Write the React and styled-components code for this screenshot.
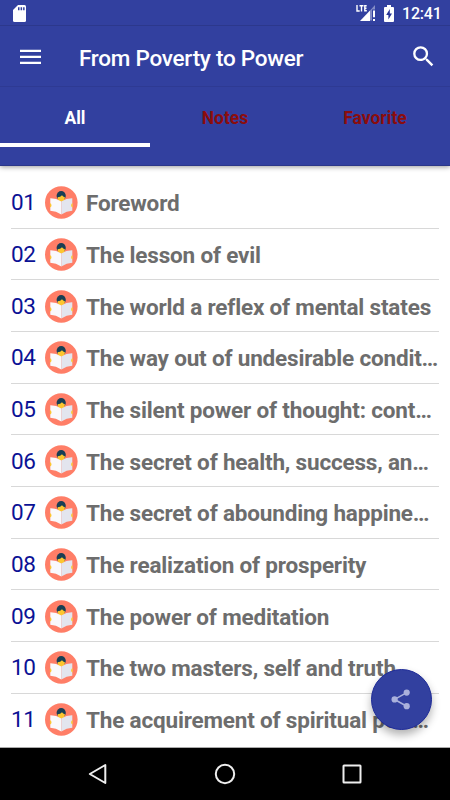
import React, { useState } from 'react';
import styled, { createGlobalStyle } from 'styled-components';

const GlobalStyle = createGlobalStyle`
  * {
    box-sizing: border-box;
  }

  body {
    margin: 0;
    background: #fff;
    font-family: Roboto, sans-serif;
  }
`;

const Screen = styled.div`
  position: relative;
  display: flex;
  flex-direction: column;
  width: 450px;
  height: 800px;
  overflow: hidden;
`;

const Header = styled.header`
  flex: none;
  height: 166px;
  background: #32409f;
  color: #fff;
  border-bottom: 1px solid #2b3789;
  box-shadow: 0 1px 5px rgba(0, 0, 0, 0.4);
`;

const StatusBar = styled.div`
  display: flex;
  align-items: center;
  height: 26px;
  padding: 1px 9px 0 13px;
  border-bottom: 1px solid #2c388c;
`;

const StatusIcons = styled.div`
  display: flex;
  align-items: center;
  gap: 8px;
  margin-left: auto;
`;

const Clock = styled.span`
  width: 39px;
  padding-top: 2px;
  font-size: 16px;
  font-weight: 500;
  line-height: 20px;
  letter-spacing: -0.2px;
  white-space: nowrap;
`;

const Toolbar = styled.div`
  display: flex;
  align-items: center;
  height: 61px;
  padding: 1px 15px 0 20px;
  border-bottom: 1px solid #2e3a93;
`;

const Title = styled.h1`
  flex: 1;
  margin: 2px 0 0 38px;
  font-size: 22.5px;
  font-weight: 500;
  line-height: 28px;
  letter-spacing: -0.25px;
  white-space: nowrap;
`;

const IconButton = styled.button`
  display: flex;
  padding: 0;
  border: none;
  background: none;
  color: inherit;
  cursor: pointer;
`;

const Tabs = styled.nav`
  display: flex;
  height: 60px;
`;

const Tab = styled.button`
  flex: 1;
  padding: 6px 0 0;
  border: none;
  border-bottom: 4px solid ${props => (props.$active ? '#fff' : 'transparent')};
  background: none;
  color: ${props => (props.$active ? '#fff' : '#8b0d0d')};
  font-family: inherit;
  font-size: 17.5px;
  font-weight: 700;
  cursor: pointer;
`;

const List = styled.ul`
  flex: 1;
  min-height: 0;
  margin: 0;
  padding: 11px 11px 0;
  overflow: hidden;
  list-style: none;
  border-bottom: 1px solid #aaa;
`;

const Row = styled.li`
  display: flex;
  align-items: center;
  height: 51.67px;
  border-bottom: 1px solid ${props => (props.$last ? 'transparent' : '#d8d8d8')};

  svg {
    flex: none;
    margin-top: 1px;
  }
`;

const RowNumber = styled.span`
  flex: none;
  width: 33.5px;
  color: #0b1295;
  font-size: 22.5px;
  line-height: 28px;
  letter-spacing: -0.3px;
`;

const RowTitle = styled.span`
  margin: 2px 0 0 8.5px;
  color: #6d6d6d;
  font-size: 22.5px;
  font-weight: 700;
  line-height: 28px;
  letter-spacing: -0.18px;
  white-space: nowrap;
`;

const NavBar = styled.footer`
  display: flex;
  flex: none;
  align-items: center;
  justify-content: space-between;
  height: 52px;
  padding: 0 88px;
  background: #000;
`;

// Floats over the end of the list
const ShareButton = styled.button`
  position: absolute;
  right: 18px;
  bottom: 70px;
  display: flex;
  align-items: center;
  justify-content: center;
  width: 61px;
  height: 61px;
  padding: 0 2px 0 0;
  border: 1px solid #1e2b98;
  border-radius: 50%;
  background: #32409f;
  box-shadow: 0 5px 9px rgba(0, 0, 0, 0.3);
  cursor: pointer;
`;

const chapters = [
  'Foreword',
  'The lesson of evil',
  'The world a reflex of mental states',
  'The way out of undesirable condit…',
  'The silent power of thought: cont…',
  'The secret of health, success, an…',
  'The secret of abounding happine…',
  'The realization of prosperity',
  'The power of meditation',
  'The two masters, self and truth',
  'The acquirement of spiritual pow…',
];

const tabs = ['All', 'Notes', 'Favorite'];

const SdCardIcon = () => (
  <svg width="14" height="17" viewBox="0 0 14 17">
    <path d="M5 0H11.5Q13 0 13 1.5V15.5Q13 17 11.5 17H1.5Q0 17 0 15.5V5Z" fill="#fff" />
    <path d="M5 2.2h1.5v3H5zM7.6 2.2h1.5v3H7.6zM10.1 2.2h1.5v3h-1.5z" fill="#32409f" />
  </svg>
);

const SignalIcon = () => (
  <svg width="20" height="18" viewBox="0 0 20 18">
    <g fill="none" stroke="#fff" strokeWidth="1.4">
      <path d="M1 1v6h2.7M3.5 1.7h4M5.5 1.7v5.8M10.7 1.7H8.8v5.1h2M8.8 4.2h1.7" />
    </g>
    <path d="M19 1v4.5h-3v11h-2v-10z" fill="#fff" opacity="0.4" />
    <path d="M14 6.5V17H4z" fill="#fff" />
    <path d="M17 6.5h2v6.8h-2zM17 15h2v2h-2z" fill="#fff" />
  </svg>
);

const BatteryIcon = () => (
  <svg width="10" height="17" viewBox="0 0 10 17">
    <path d="M3 0h4v2h2q1 0 1 1v13q0 1-1 1H1q-1 0-1-1V3q0-1 1-1h2z" fill="#fff" />
    <path d="M5.8 4L2.2 10h2.2v4.5L8 8.4H5.8z" fill="#263396" />
  </svg>
);

const MenuIcon = () => (
  <svg width="21" height="16" viewBox="0 0 21 16">
    <path d="M0 1.8h21M0 7.8h21M0 13.8h21" stroke="#fff" strokeWidth="2.3" />
  </svg>
);

const SearchIcon = () => (
  <svg width="23" height="23" viewBox="2 2 20 20">
    <path
      fill="#fff"
      d="M15.5 14h-.79l-.28-.27A6.47 6.47 0 0 0 16 9.5 6.5 6.5 0 1 0 9.5 16c1.61 0 3.09-.59 4.23-1.57l.27.28v.79l5 4.99L20.49 19l-4.99-5zm-6 0a4.5 4.5 0 1 1 0-9 4.5 4.5 0 0 1 0 9z"
    />
  </svg>
);

const ReaderIcon = () => (
  <svg width="33" height="33" viewBox="0 0 33 33">
    <circle cx="16.3" cy="16.5" r="16.3" fill="#ff7e67" />
    <circle cx="16.2" cy="9.7" r="4.6" fill="#183e54" />
    <path d="M12.6 11.2q2.8-.2 4.4-2 1 1.6 2.9 2-.2 4.2-3.7 4.2t-3.6-4.2z" fill="#fdc62f" />
    <path d="M5.3 12.3q6-.1 11 3.2v12.9q-5.2-3.4-11-3.6z" fill="#f9f9fc" />
    <path d="M27.3 12.3q-6-.1-11 3.2v12.9q5.2-3.4 11-3.6z" fill="#e3e5ee" />
    <path d="M4.9 17.2q1.5.2 1.6 2.1t-1.6 2.2zM27.7 17.2q-1.5.2-1.6 2.1t1.6 2.2z" fill="#fdc62f" />
  </svg>
);

const ShareIcon = () => (
  <svg width="20" height="21" viewBox="0 0 20 21">
    <path d="M15.7 3.6L3.6 10.4l12.1 6.8" fill="none" stroke="#aab1dc" strokeWidth="1.6" />
    <g fill="#aab1dc">
      <circle cx="15.7" cy="3.6" r="3.1" />
      <circle cx="3.6" cy="10.4" r="3.1" />
      <circle cx="15.7" cy="17.2" r="3.1" />
    </g>
  </svg>
);

function App() {
  const [activeTab, setActiveTab] = useState('All');

  return (
    <Screen>
      <GlobalStyle />
      <Header>
        <StatusBar>
          <SdCardIcon />
          <StatusIcons>
            <SignalIcon />
            <BatteryIcon />
            <Clock>12:41</Clock>
          </StatusIcons>
        </StatusBar>

        <Toolbar>
          <IconButton aria-label="Menu">
            <MenuIcon />
          </IconButton>
          <Title>From Poverty to Power</Title>
          <IconButton aria-label="Search">
            <SearchIcon />
          </IconButton>
        </Toolbar>

        <Tabs>
          {tabs.map((tab) => (
            <Tab key={tab} $active={activeTab === tab} onClick={() => setActiveTab(tab)}>
              {tab}
            </Tab>
          ))}
        </Tabs>
      </Header>

      {/* Chapter list */}
      <List>
        {chapters.map((chapter, index) => (
          <Row key={chapter} $last={index === chapters.length - 1}>
            <RowNumber>{String(index + 1).padStart(2, '0')}</RowNumber>
            <ReaderIcon />
            <RowTitle>{chapter}</RowTitle>
          </Row>
        ))}
      </List>

      {/* Android system buttons */}
      <NavBar>
        <svg width="19" height="22" viewBox="0 0 19 22">
          <path d="M17.3 2v18L1.8 11z" fill="none" stroke="#eee" strokeWidth="2" strokeLinejoin="round" />
        </svg>
        <svg width="22" height="22" viewBox="0 0 22 22">
          <circle cx="11" cy="11" r="9.2" fill="none" stroke="#eee" strokeWidth="2" />
        </svg>
        <svg width="20" height="20" viewBox="0 0 20 20">
          <rect x="1.5" y="1.5" width="17" height="17" rx="0.5" fill="none" stroke="#eee" strokeWidth="2" />
        </svg>
      </NavBar>

      <ShareButton aria-label="Share">
        <ShareIcon />
      </ShareButton>
    </Screen>
  );
}

export default App;
